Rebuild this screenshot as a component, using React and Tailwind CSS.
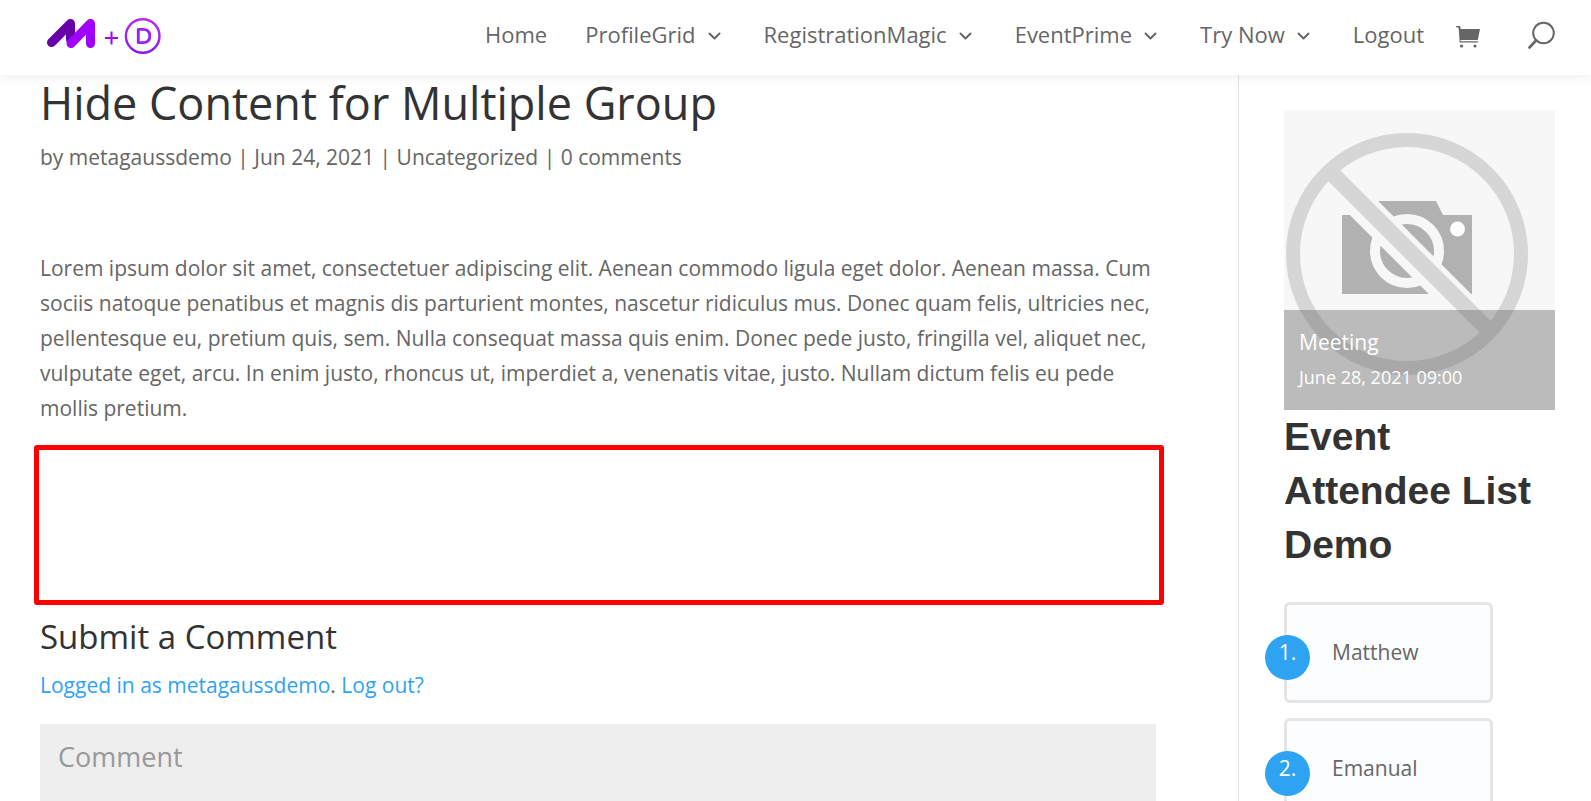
const MENU = [
  { label: 'Home' },
  { label: 'ProfileGrid', hasMenu: true },
  { label: 'RegistrationMagic', hasMenu: true },
  { label: 'EventPrime', hasMenu: true },
  { label: 'Try Now', hasMenu: true },
  { label: 'Logout' },
];

const ATTENDEES = ['Matthew', 'Emanual'];

function Logo() {
  return (
    <svg width="120" height="43" viewBox="0 0 120 43" fill="none" aria-label="Home page">
      <defs>
        <linearGradient id="ring" x1="0" y1="0" x2="0" y2="1">
          <stop offset="0" stopColor="#b52cf7" />
          <stop offset="1" stopColor="#8a18f0" />
        </linearGradient>
      </defs>
      <path d="M7.500 26.500 26.500 7.500v16" stroke="#6600a8" strokeWidth="9" strokeLinecap="round" strokeLinejoin="round" />
      <path d="M27 27.500 46.500 7.500v20" stroke="#a100ff" strokeWidth="9" strokeLinecap="round" strokeLinejoin="round" />
      <path d="M61 22h13M67.500 15.500v13" stroke="#a100ff" strokeWidth="2" />
      <circle cx="98.700" cy="20" r="16.800" stroke="url(#ring)" strokeWidth="2.400" />
      <path d="M94.300 13.300h4.500c4.500 0 7 2.600 7 6.700s-2.500 6.700-7 6.700h-4.500z" stroke="#9a22f3" strokeWidth="2.800" strokeLinejoin="round" />
    </svg>
  );
}

function ChevronIcon() {
  return (
    <svg width="13" height="9" viewBox="0 0 13 9" fill="none" stroke="#666" strokeWidth="2" className="mt-1 mr-[5px]">
      <path d="M1.500 1.500 6.500 6.500l5-5" strokeLinecap="round" strokeLinejoin="round" />
    </svg>
  );
}

function CartIcon() {
  return (
    <svg width="24" height="24" viewBox="0 0 24 24" fill="#666">
      <path d="M0 1h4l.8 3H24l-2.200 11H4.500v1.200h17.500v1.300H3.500v-3L2.600 2.500H.5z" />
      <circle cx="5.500" cy="21" r="1.600" />
      <circle cx="19" cy="21" r="1.600" />
    </svg>
  );
}

function SearchIcon() {
  return (
    <svg width="27" height="29" viewBox="0 0 27 29" fill="none" stroke="#666">
      <circle cx="15.500" cy="12" r="10.300" strokeWidth="2" />
      <path d="M8 19.500 1.500 26.500" strokeWidth="2.600" strokeLinecap="round" />
    </svg>
  );
}

function NoPhoto() {
  return (
    <svg viewBox="0 0 271 300" className="block w-full bg-[#f7f7f7]" aria-hidden="true">
      <path d="M58 105h36V91h58l7 14h29v79H58z" fill="#b1b1b1" />
      <circle cx="173.500" cy="119" r="7.500" fill="#fff" />
      <circle cx="123" cy="141" r="32" fill="none" stroke="#f7f7f7" strokeWidth="10" />
      <path d="M45 63 206 224" stroke="#f7f7f7" strokeWidth="30" />
      <circle cx="123" cy="144" r="114" fill="none" stroke="#d6d6d6" strokeWidth="14" />
      <path d="M47 62.500 204 219.500" stroke="#d6d6d6" strokeWidth="16" />
    </svg>
  );
}

function Header() {
  return (
    <header className="relative z-10 flex h-[75px] items-center justify-between bg-white pr-9 pl-11 shadow-[0_1px_12px_rgba(0,0,0,0.08)]">
      <a href="#home">
        <Logo />
      </a>
      <div className="flex items-center pb-[5px]">
        <nav className="flex items-center gap-[38px] pb-[2px] text-[22px]">
          {MENU.map((item) => (
            <a key={item.label} href="#menu" className="flex items-center gap-3">
              {item.label}
              {item.hasMenu && <ChevronIcon />}
            </a>
          ))}
        </nav>
        <a href="#cart" aria-label="Cart" className="mt-[3px] ml-8">
          <CartIcon />
        </a>
        <button type="button" aria-label="Search" className="ml-12">
          <SearchIcon />
        </button>
      </div>
    </header>
  );
}

function Post() {
  return (
    <main className="min-w-0 flex-1 pt-[5px] pr-[82px] pl-10">
      <h1 className="text-[45px] leading-[45px] text-[#333]">Hide Content for Multiple Group</h1>
      <p className="mt-[15px]">
        by <a href="#author">metagaussdemo</a> | Jun 24, 2021 | <a href="#category">Uncategorized</a> |{' '}
        <a href="#comments">0 comments</a>
      </p>

      <p className="mt-[76px]">
        Lorem ipsum dolor sit amet, consectetuer adipiscing elit. Aenean commodo ligula eget dolor. Aenean massa.
        Cum sociis natoque penatibus et magnis dis parturient montes, nascetur ridiculus mus. Donec quam felis,
        ultricies nec, pellentesque eu, pretium quis, sem. Nulla consequat massa quis enim. Donec pede justo,
        fringilla vel, aliquet nec, vulputate eget, arcu. In enim justo, rhoncus ut, imperdiet a, venenatis vitae,
        justo. Nullam dictum felis eu pede mollis pretium.
      </p>

      {/* hidden content area */}
      <div className="mt-[19px] -mr-2 -ml-[6px] h-40 rounded-[3px] border-[5px] border-[#ff0000]" />

      <h2 className="mt-[15px] text-[33px] leading-[33px] text-[#333]">Submit a Comment</h2>
      <p className="mt-[15px] text-[#2ea3f2]">
        <a href="#profile">Logged in as metagaussdemo</a>
        <span className="text-[#666]">.</span> <a href="#logout">Log out?</a>
      </p>
      <textarea
        aria-label="Comment"
        placeholder="Comment"
        className="mt-[21px] block h-[94px] w-full resize-none bg-[#eee] px-[18px] py-[15px] text-[27px] leading-9 placeholder:text-[#999]"
      />
    </main>
  );
}

function Sidebar() {
  return (
    <aside className="mr-9 w-[317px] shrink-0 border-l border-[#e2e2e2] pt-[35px] pl-[45px]">
      <a href="#event" className="relative block">
        <NoPhoto />
        <div className="absolute inset-x-0 bottom-0 h-[100px] bg-[#6a6a6a]/42 px-[15px] pt-[15px] font-medium text-white">
          <p>Meeting</p>
          <p className="text-lg leading-[35px]">June 28, 2021 09:00</p>
        </div>
      </a>
      <h2 className="font-['Liberation_Sans',Arial,sans-serif] text-[39px] leading-[54px] font-bold text-[#333]">
        Event Attendee List Demo
      </h2>
      <ol className="mt-[30px] flex flex-col gap-[15px]">
        {ATTENDEES.map((name, i) => (
          <li
            key={name}
            className="relative flex h-[101px] w-[209px] items-center rounded-md border-[3px] border-[#e5e5e5] bg-[#fbfdff] pl-[45px]"
          >
            <span className="absolute top-[30px] -left-[22px] h-[45px] w-[45px] rounded-full bg-[#2ea3f2] text-center font-medium text-white">
              {i + 1}.
            </span>
            {name}
          </li>
        ))}
      </ol>
    </aside>
  );
}

export default function App() {
  return (
    <div className="min-h-screen bg-white font-['Open_Sans','Noto_Sans',sans-serif] text-[21px] leading-[35px] text-[#666]">
      <Header />
      <div className="flex">
        <Post />
        <Sidebar />
      </div>
    </div>
  );
}
